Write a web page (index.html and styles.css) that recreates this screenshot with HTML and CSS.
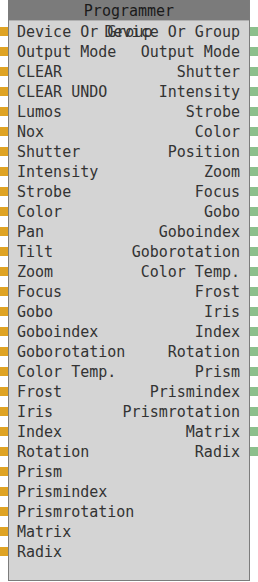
FILE: index.html
```html
<!DOCTYPE html>
<html lang="en">
<head>
    <meta charset="UTF-8">
    <meta name="viewport" content="width=device-width, initial-scale=1.0">
    <title>Programmer</title>
    <link rel="stylesheet" href="styles.css">
</head>
<body>
    <div class="graph">
        <!-- Input ports -->
        <div class="ports inputs">
            <span></span><span></span><span></span><span></span><span></span><span></span><span></span>
            <span></span><span></span><span></span><span></span><span></span><span></span><span></span>
            <span></span><span></span><span></span><span></span><span></span><span></span><span></span>
            <span></span><span></span><span></span><span></span><span></span><span></span>
        </div>

        <div class="node">
            <div class="title">Programmer</div>
            <div class="body">
                <ul class="labels left">
                    <li>Device Or Group</li>
                    <li>Output Mode</li>
                    <li>CLEAR</li>
                    <li>CLEAR UNDO</li>
                    <li>Lumos</li>
                    <li>Nox</li>
                    <li>Shutter</li>
                    <li>Intensity</li>
                    <li>Strobe</li>
                    <li>Color</li>
                    <li>Pan</li>
                    <li>Tilt</li>
                    <li>Zoom</li>
                    <li>Focus</li>
                    <li>Gobo</li>
                    <li>Goboindex</li>
                    <li>Goborotation</li>
                    <li>Color Temp.</li>
                    <li>Frost</li>
                    <li>Iris</li>
                    <li>Index</li>
                    <li>Rotation</li>
                    <li>Prism</li>
                    <li>Prismindex</li>
                    <li>Prismrotation</li>
                    <li>Matrix</li>
                    <li>Radix</li>
                </ul>
                <ul class="labels right">
                    <li>Device Or Group</li>
                    <li>Output Mode</li>
                    <li>Shutter</li>
                    <li>Intensity</li>
                    <li>Strobe</li>
                    <li>Color</li>
                    <li>Position</li>
                    <li>Zoom</li>
                    <li>Focus</li>
                    <li>Gobo</li>
                    <li>Goboindex</li>
                    <li>Goborotation</li>
                    <li>Color Temp.</li>
                    <li>Frost</li>
                    <li>Iris</li>
                    <li>Index</li>
                    <li>Rotation</li>
                    <li>Prism</li>
                    <li>Prismindex</li>
                    <li>Prismrotation</li>
                    <li>Matrix</li>
                    <li>Radix</li>
                </ul>
            </div>
        </div>

        <!-- Output ports -->
        <div class="ports outputs">
            <span></span><span></span><span></span><span></span><span></span><span></span><span></span>
            <span></span><span></span><span></span><span></span><span></span><span></span><span></span>
            <span></span><span></span><span></span><span></span><span></span><span></span><span></span>
            <span></span>
        </div>
    </div>
</body>
</html>
```

FILE: styles.css
```css
body {
    margin: 0;
    padding: 0;
    background-color: #fff;
    font-family: "DejaVu Sans Mono", monospace;
    font-size: 15px;
    color: #333;
}
.graph {
    display: flex;
    align-items: flex-start;
}

/* Port columns */
.ports {
    width: 8px;
    display: flex;
    flex-direction: column;
    gap: 11px;
    padding-top: 27px;
}
.ports span {
    display: block;
    height: 9px;
}
.inputs span {
    background-color: #dea324;
}
.outputs span {
    background-color: #8cbf8c;
}

/* Node box */
.node {
    width: 240px;
    height: 580px;
    border: 1px solid #7c7c7c;
    border-top: none;
    background-color: #d4d4d4;
}
.title {
    height: 20px;
    line-height: 22px;
    background-color: #7b7b7b;
    border-bottom: 1px solid #b0b0b0;
    text-align: center;
    color: #1a1a1a;
}
.body {
    display: grid;
    padding: 1px 9px 0 8px;
}
.labels {
    grid-area: 1 / 1;
    list-style: none;
    margin: 0;
    padding: 0;
}
.labels li {
    height: 20px;
    line-height: 20px;
    white-space: nowrap;
}
.right {
    text-align: right;
}
```
